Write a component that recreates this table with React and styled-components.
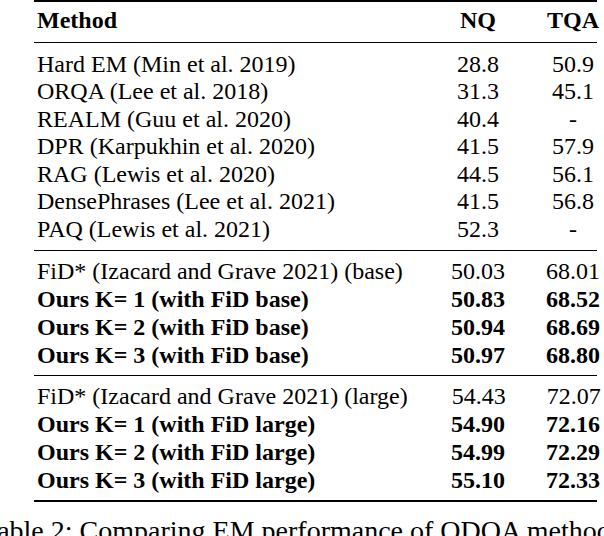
import React from 'react';
import styled, {createGlobalStyle} from 'styled-components';

const GlobalStyle = createGlobalStyle`
    html, body {
        margin: 0;
        padding: 0;
        background: #fff;
    }
    body {
        width: 604px;
        height: 536px;
        overflow: hidden;
        font-family: "Liberation Serif", "Times New Roman", serif;
        color: #000;
    }
`;

const filas = [
    {
        grupo: 'prev',
        items: [
            {metodo: 'Hard EM (Min et al. 2019)', nq: '28.8', tqa: '50.9'},
            {metodo: 'ORQA (Lee et al. 2018)', nq: '31.3', tqa: '45.1'},
            {metodo: 'REALM (Guu et al. 2020)', nq: '40.4', tqa: '-'},
            {metodo: 'DPR (Karpukhin et al. 2020)', nq: '41.5', tqa: '57.9'},
            {metodo: 'RAG (Lewis et al. 2020)', nq: '44.5', tqa: '56.1'},
            {metodo: 'DensePhrases (Lee et al. 2021)', nq: '41.5', tqa: '56.8'},
            {metodo: 'PAQ (Lewis et al. 2021)', nq: '52.3', tqa: '-'},
        ],
    },
    {
        grupo: 'base',
        items: [
            {metodo: 'FiD* (Izacard and Grave 2021) (base)', nq: '50.03', tqa: '68.01'},
            {metodo: 'Ours K= 1 (with FiD base)', nq: '50.83', tqa: '68.52', negrita: true},
            {metodo: 'Ours K= 2 (with FiD base)', nq: '50.94', tqa: '68.69', negrita: true},
            {metodo: 'Ours K= 3 (with FiD base)', nq: '50.97', tqa: '68.80', negrita: true},
        ],
    },
    {
        grupo: 'large',
        items: [
            {metodo: 'FiD* (Izacard and Grave 2021) (large)', nq: '54.43', tqa: '72.07'},
            {metodo: 'Ours K= 1 (with FiD large)', nq: '54.90', tqa: '72.16', negrita: true},
            {metodo: 'Ours K= 2 (with FiD large)', nq: '54.99', tqa: '72.29', negrita: true},
            {metodo: 'Ours K= 3 (with FiD large)', nq: '55.10', tqa: '72.33', negrita: true},
        ],
    },
];

const App = () => {
    return (
        <>
            <GlobalStyle />
            <Pagina>
                <Tabla>
                    <Cabecera>
                        <Celda $negrita>Method</Celda>
                        <Numero $negrita>NQ</Numero>
                        <Numero $negrita>TQA</Numero>
                    </Cabecera>
                    {filas.map((g, i) => (
                        <Grupo key={g.grupo} $primero={i === 0} $ultimo={i === filas.length - 1}>
                            {g.items.map((f) => (
                                <Fila key={f.metodo} $alto={i === 0 ? 27.5 : 28}>
                                    <Celda $negrita={f.negrita}>{f.metodo}</Celda>
                                    <Numero $negrita={f.negrita}>{f.nq}</Numero>
                                    <Numero $negrita={f.negrita}>{f.tqa}</Numero>
                                </Fila>
                            ))}
                        </Grupo>
                    ))}
                </Tabla>
                <Leyenda>
                    Table 2: Comparing EM performance of ODQA methods on NQ and TriviaQA.
                </Leyenda>
            </Pagina>
        </>
    );
}

const Pagina = styled.div`
    width: 604px;
    height: 536px;
    overflow: hidden;
`;

const Tabla = styled.div`
    margin-left: 34px;
    width: 563px;
    border-top: 2px solid #000;
    font-size: 24px;
`;

const Cabecera = styled.div`
    display: grid;
    grid-template-columns: 1fr 48px 48px;
    column-gap: 47px;
    line-height: 28px;
    padding: 4px 0 8px;
    border-bottom: 1px solid #000;
`;

const Grupo = styled.div`
    padding: ${p => p.$primero ? '7.5px 0 7px' : '6px 0'};
    border-bottom: ${p => p.$ultimo ? '2px' : '1px'} solid #000;
`;

const Fila = styled.div`
    display: grid;
    grid-template-columns: 1fr 48px 48px;
    column-gap: 47px;
    line-height: ${p => p.$alto}px;
`;

const Celda = styled.div`
    padding-left: 3px;
    white-space: nowrap;
    font-weight: ${p => p.$negrita ? 700 : 400};
`;

const Numero = styled.div`
    display: flex;
    justify-content: center;
    white-space: nowrap;
    font-weight: ${p => p.$negrita ? 700 : 400};
`;

const Leyenda = styled.div`
    margin-top: 13px;
    margin-left: -18px;
    font-size: 28px;
    line-height: 32px;
    white-space: nowrap;
`;

export default App;
